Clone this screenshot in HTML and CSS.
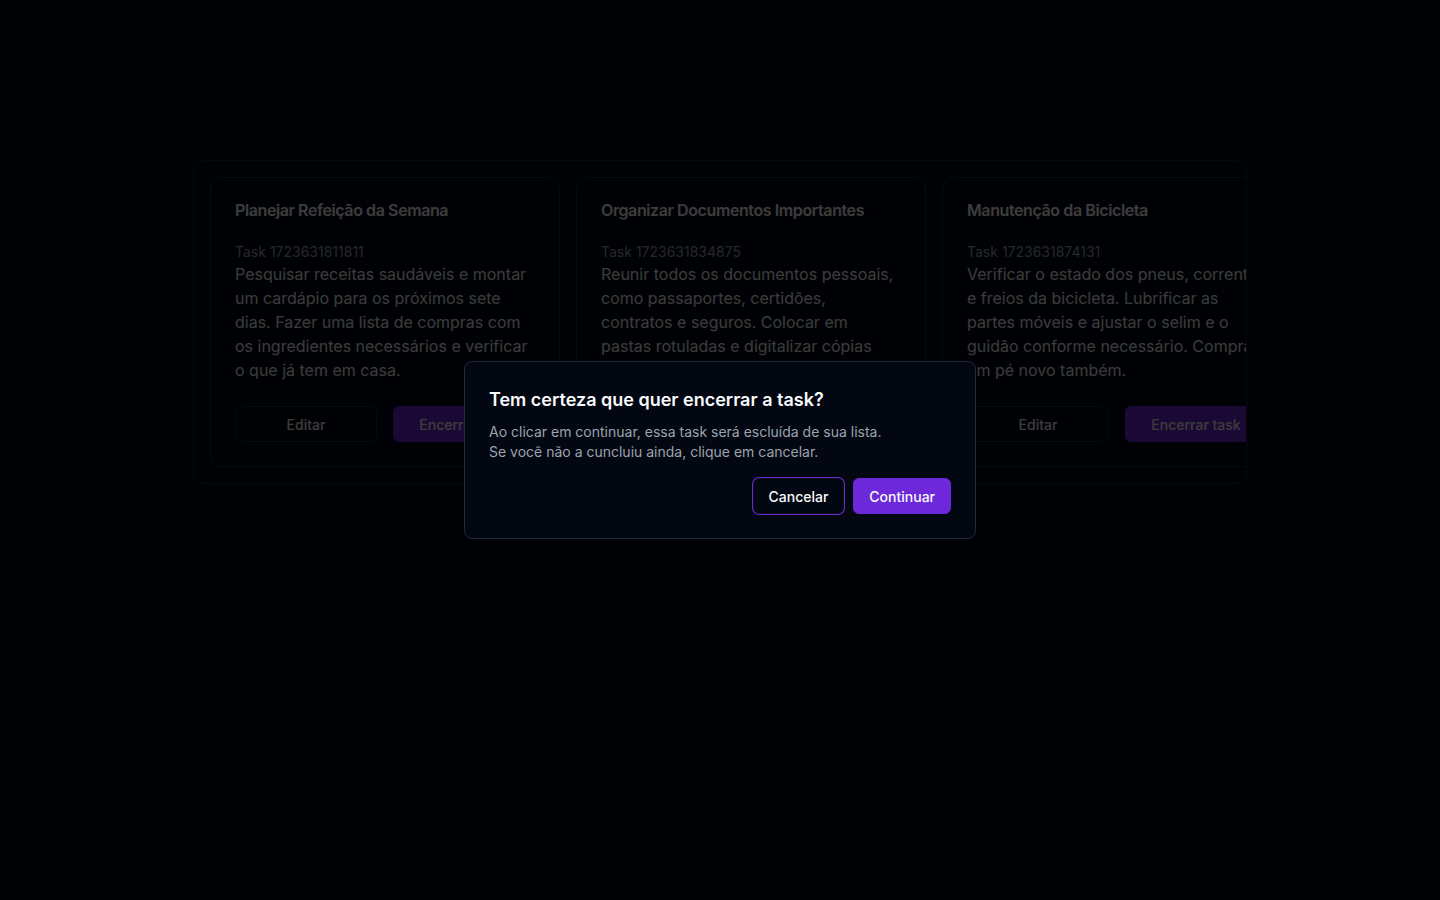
FILE: index.html
```html
<!DOCTYPE html>
<html lang="pt-BR">
<head>
<meta charset="utf-8">
<title>Tasks</title>
<link rel="stylesheet" href="styles.css">
</head>
<body>
<main class="page">
  <section class="board">
    <article class="card">
      <h3 class="card-title">Planejar Refeição da Semana</h3>
      <div class="card-content">
        <p class="task-id">Task 1723631811811</p>
        <p class="task-desc">Pesquisar receitas saudáveis e montar um cardápio para os próximos sete dias. Fazer uma lista de compras com os ingredientes necessários e verificar o que já tem em casa.</p>
      </div>
      <div class="card-footer">
        <button class="btn btn-outline">Editar</button>
        <button class="btn btn-primary">Encerrar task</button>
      </div>
    </article>
    <article class="card">
      <h3 class="card-title">Organizar Documentos Importantes</h3>
      <div class="card-content">
        <p class="task-id">Task 1723631834875</p>
        <p class="task-desc">Reunir todos os documentos pessoais, como passaportes, certidões, contratos e seguros. Colocar em pastas rotuladas e digitalizar cópias para backup.</p>
      </div>
      <div class="card-footer">
        <button class="btn btn-outline">Editar</button>
        <button class="btn btn-primary">Encerrar task</button>
      </div>
    </article>
    <article class="card">
      <h3 class="card-title">Manutenção da Bicicleta</h3>
      <div class="card-content">
        <p class="task-id">Task 1723631874131</p>
        <p class="task-desc">Verificar o estado dos pneus, correntes e freios da bicicleta. Lubrificar as partes móveis e ajustar o selim e o guidão conforme necessário. Comprar um pé novo também.</p>
      </div>
      <div class="card-footer">
        <button class="btn btn-outline">Editar</button>
        <button class="btn btn-primary">Encerrar task</button>
      </div>
    </article>
  </section>
</main>

<div class="overlay"></div>

<div class="dialog" role="alertdialog">
  <h2 class="dialog-title">Tem certeza que quer encerrar a task?</h2>
  <p class="dialog-desc">Ao clicar em continuar, essa task será escluída de sua lista.<br>Se você não a cuncluiu ainda, clique em cancelar.</p>
  <div class="dialog-footer">
    <button class="dbtn dbtn-cancel">Cancelar</button>
    <button class="dbtn dbtn-continue">Continuar</button>
  </div>
</div>
</body>
</html>
```

FILE: styles.css
```css
* { box-sizing: border-box; }

html, body {
  margin: 0;
  padding: 0;
  background: #030712;
  font-family: Inter, "Noto Sans", sans-serif;
  color: #f9fafb;
  height: 100%;
}

.page {
  padding-top: 160px;
  display: flex;
  justify-content: center;
}

.board {
  width: 1054px;
  display: flex;
  gap: 16px;
  padding: 16px;
  border: 1px solid #1f2937;
  border-radius: 12px;
  overflow: hidden;
}

.card {
  flex: 0 0 350px;
  border: 1px solid #1f2937;
  border-radius: 12px;
  background: #030712;
  display: flex;
  flex-direction: column;
}

.card-title {
  margin: 0;
  padding: 24px;
  font-size: 16px;
  line-height: 16px;
  font-weight: 600;
  letter-spacing: -0.025em;
  color: #f9fafb;
}

.card-content {
  padding: 0 24px 24px;
}

.task-id {
  margin: 0;
  font-size: 14px;
  line-height: 20px;
  color: #9ca3af;
}

.task-desc {
  margin: 0;
  font-size: 16px;
  line-height: 24px;
  color: #f3f4f6;
}

.card-footer {
  margin-top: auto;
  padding: 0 24px 24px;
  display: flex;
  gap: 16px;
}

.btn {
  flex: 1 1 0;
  height: 36px;
  border-radius: 6px;
  font-family: inherit;
  font-size: 14px;
  font-weight: 500;
  color: #f9fafb;
  white-space: nowrap;
}

.btn-outline {
  background: #030712;
  border: 1px solid #1f2937;
}

.btn-primary {
  background: #6d28d9;
  border: 1px solid #6d28d9;
}

.overlay {
  position: fixed;
  inset: 0;
  background: rgba(0, 0, 0, 0.76);
}

.dialog {
  position: fixed;
  left: 50%;
  top: 50%;
  transform: translate(-50%, -50%);
  width: 512px;
  padding: 24px;
  background: #030712;
  border: 1px solid #1f2937;
  border-radius: 8px;
  display: flex;
  flex-direction: column;
}

.dialog-title {
  margin: 0;
  font-size: 18px;
  line-height: 28px;
  font-weight: 600;
  color: #f9fafb;
}

.dialog-desc {
  margin: 8px 0 0;
  font-size: 14px;
  line-height: 20px;
  color: #9ca3af;
}

.dialog-footer {
  margin-top: 16px;
  display: flex;
  justify-content: flex-end;
  gap: 9px;
}

.dbtn {
  height: 36px;
  padding: 0 15px;
  border-radius: 6px;
  font-family: inherit;
  font-size: 14px;
  font-weight: 500;
  color: #f9fafb;
}

.dbtn-cancel {
  background: #030712;
  border: 1px solid #0b0f1a;
  box-shadow: 0 0 0 1px #6d28d9;
}

.dbtn-continue {
  background: #6d28d9;
  border: 1px solid #6d28d9;
}
```
